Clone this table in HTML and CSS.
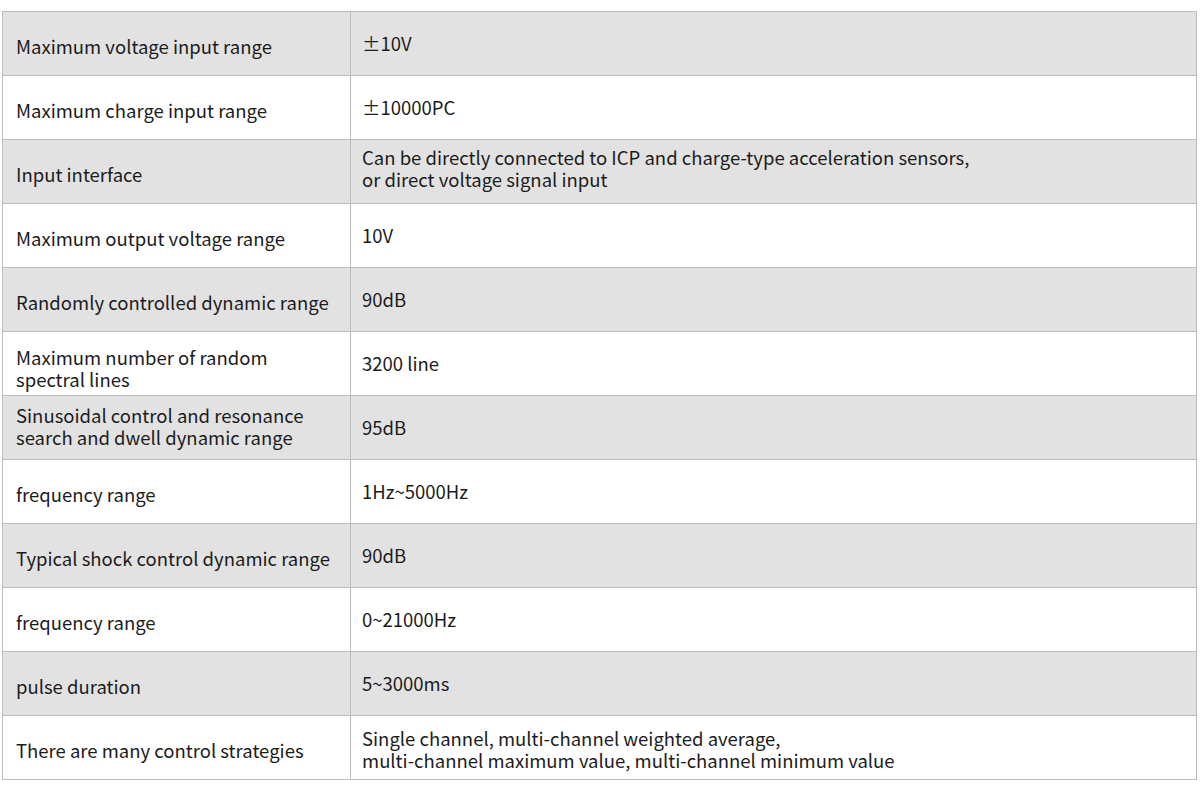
FILE: index.html
```html
<!DOCTYPE html>
<html>
<head>
<meta charset="utf-8">
<link rel="stylesheet" href="styles.css">
</head>
<body>
<table class="spec">
<tr class="g"><td class="k">Maximum voltage input range</td><td class="v">±10V</td></tr>
<tr><td class="k">Maximum charge input range</td><td class="v">±10000PC</td></tr>
<tr class="g"><td class="k">Input interface</td><td class="v v-high">Can be directly connected to ICP and charge-type acceleration sensors,<br>or direct voltage signal input</td></tr>
<tr><td class="k">Maximum output voltage range</td><td class="v">10V</td></tr>
<tr class="g"><td class="k">Randomly controlled dynamic range</td><td class="v">90dB</td></tr>
<tr><td class="k k-low">Maximum number of random<br>spectral lines</td><td class="v">3200 line</td></tr>
<tr class="g"><td class="k k-high">Sinusoidal control and resonance<br>search and dwell dynamic range</td><td class="v">95dB</td></tr>
<tr><td class="k">frequency range</td><td class="v">1Hz~5000Hz</td></tr>
<tr class="g"><td class="k">Typical shock control dynamic range</td><td class="v">90dB</td></tr>
<tr><td class="k">frequency range</td><td class="v">0~21000Hz</td></tr>
<tr class="g"><td class="k">pulse duration</td><td class="v">5~3000ms</td></tr>
<tr><td class="k">There are many control strategies</td><td class="v v-low">Single channel, multi-channel weighted average,<br>multi-channel maximum value, multi-channel minimum value</td></tr>
</table>
</body>
</html>
```
FILE: styles.css
```css
html, body {
  margin: 0;
  padding: 0;
  background: #ffffff;
}
body {
  padding: 11px 3px 0 2px;
  font-family: "Noto Sans CJK SC", "Noto Sans", sans-serif;
  font-size: 18.5px;
  line-height: 22px;
  color: #1c1c1c;
}
.spec {
  width: 1195px;
  border-collapse: collapse;
  table-layout: fixed;
}
.spec td {
  box-sizing: border-box;
  height: 64px;
  border: 1px solid #bdbdbd;
  vertical-align: middle;
  padding: 0;
}
.spec .k {
  width: 348px;
  padding: 5px 0 0 13px;
}
.spec .k-low {
  padding-top: 9px;
}
.spec .k-high {
  padding-top: 0;
  padding-bottom: 3px;
}
.spec .v {
  padding: 0 0 1px 11px;
}
.spec .v-high {
  padding-bottom: 7px;
}
.spec .v-low {
  padding-top: 2px;
  padding-bottom: 0;
}
.spec tr.g td {
  background: #e2e2e2;
}
```
